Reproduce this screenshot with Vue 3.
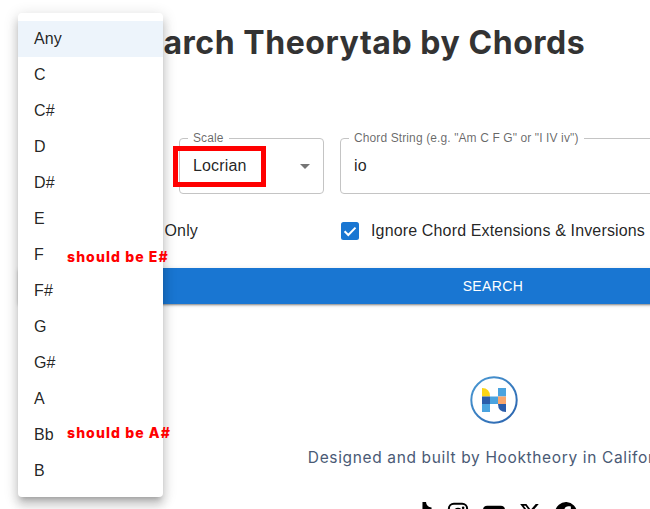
<template>
  <div class="page">
    <h1 class="title">Search Theorytab by Chords</h1>

    <div class="fields">
      <div class="field key-field">
        <span class="field-label">Key</span>
        <span class="field-value">Any</span>
      </div>
      <div class="field scale-field">
        <span class="field-label">Scale</span>
        <span class="field-value">Locrian</span>
        <span class="caret"></span>
      </div>
      <div class="field chord-field">
        <span class="field-label">Chord String (e.g. "Am C F G" or "I IV iv")</span>
        <span class="field-value">io</span>
      </div>
    </div>

    <div class="checks">
      <label class="check first-check">Exact Key Only</label>
      <label class="check">
        <svg class="checkbox" width="18" height="18" viewBox="0 0 18 18">
          <rect width="18" height="18" rx="2.5" fill="#1976d2" />
          <path d="M3.6 9.3l3.7 3.7 7.2-7.4" fill="none" stroke="#fff" stroke-width="2" />
        </svg>
        Ignore Chord Extensions &amp; Inversions
      </label>
    </div>

    <button class="search">SEARCH</button>

    <footer class="footer">
      <svg class="logo" width="48" height="48" viewBox="0 0 48 48">
        <defs>
          <linearGradient id="ring" x1="0" y1="0" x2="1" y2="1">
            <stop offset="0" stop-color="#4a9ad4" />
            <stop offset="1" stop-color="#2a62ad" />
          </linearGradient>
        </defs>
        <circle cx="24" cy="24" r="22.7" fill="none" stroke="url(#ring)" stroke-width="2" />
        <path d="M12 12q8 0 8 8.500h-8z" fill="#fbd416" />
        <rect x="12" y="20.500" width="8" height="7.500" fill="#2a5caa" />
        <rect x="12" y="28" width="8" height="8" fill="#4aa3df" />
        <rect x="20" y="20.500" width="8" height="7.500" fill="#4aa3df" />
        <rect x="28" y="12" width="8" height="8.500" fill="#4aa3df" />
        <rect x="28" y="20.500" width="8" height="7.500" fill="#f9a66c" />
        <path d="M28 28h8v8q-8 0-8-8z" fill="#2a5caa" />
      </svg>
      <p class="credit">Designed and built by Hooktheory in California</p>
      <div class="socials">
        <svg width="22" height="22" viewBox="0 0 24 24"><path d="M12.525.02c1.310-.02 2.610-.01 3.910-.02.080 1.530.630 3.090 1.750 4.170 1.120 1.110 2.700 1.620 4.240 1.790v4.030c-1.440-.050-2.890-.350-4.200-.970-.570-.260-1.100-.590-1.620-.930-.010 2.920.010 5.840-.020 8.750-.080 1.400-.540 2.790-1.350 3.940-1.310 1.920-3.580 3.170-5.910 3.210-1.430.080-2.860-.310-4.080-1.030-2.020-1.190-3.440-3.370-3.650-5.710-.020-.500-.030-1-.010-1.490.180-1.900 1.120-3.720 2.580-4.960 1.660-1.440 3.980-2.130 6.150-1.720.020 1.480-.040 2.960-.040 4.440-.990-.320-2.150-.230-3.020.370-.630.410-1.110 1.040-1.360 1.750-.210.510-.150 1.070-.140 1.610.240 1.640 1.820 3.020 3.500 2.870 1.120-.010 2.190-.660 2.770-1.610.190-.330.400-.670.410-1.060.100-1.790.060-3.570.070-5.360.010-4.030-.010-8.050.020-12.070z" /></svg>
        <svg width="22" height="22" viewBox="0 0 24 24"><rect x="2" y="2" width="20" height="20" rx="5.500" fill="none" stroke="#000" stroke-width="2.200" /><circle cx="12" cy="12" r="4.500" fill="none" stroke="#000" stroke-width="2.200" /><circle cx="17.600" cy="6.400" r="1.400" /></svg>
        <svg width="22" height="22" viewBox="0 0 24 24"><path d="M4.500 4h15A4.500 4.500 0 0 1 24 8.500v7a4.500 4.500 0 0 1-4.500 4.500h-15A4.500 4.500 0 0 1 0 15.500v-7A4.500 4.500 0 0 1 4.500 4z" /></svg>
        <svg width="22" height="22" viewBox="0 0 24 24"><path d="M18.244 2.250h3.308l-7.227 8.260 8.502 11.240H16.170l-5.214-6.817L4.990 21.750H1.680l7.730-8.835L1.254 2.250H8.080l4.713 6.231zm-1.161 17.520h1.833L7.084 4.126H5.117z" /></svg>
        <svg width="22" height="22" viewBox="0 0 24 24"><path d="M24 12a12 12 0 1 0-13.900 11.900v-8.400H7.100V12h3V9.400c0-3 1.800-4.700 4.500-4.700 1.300 0 2.700.200 2.700.200v3h-1.500c-1.500 0-2 .900-2 1.900V12h3.400l-.500 3.500h-2.900v8.400A12 12 0 0 0 24 12z" /></svg>
      </div>
    </footer>

    <ul class="menu">
      <li v-for="(note, i) in notes" :key="note" class="menu-item" :class="{ selected: i === 0 }">{{ note }}</li>
    </ul>

    <span class="highlight"></span>
    <span class="note note-f">should be E#</span>
    <span class="note note-bb">should be A#</span>
  </div>
</template>

<script setup>
const notes = ['Any', 'C', 'C#', 'D', 'D#', 'E', 'F', 'F#', 'G', 'G#', 'A', 'Bb', 'B']
</script>

<style>
html, body {
  margin: 0;
  height: 509px;
  overflow: hidden;
  background: #fff;
}
</style>

<style scoped>
.page {
  position: relative;
  width: 986px;
  height: 509px;
  padding: 0 18px;
  box-sizing: border-box;
  font-family: "Liberation Sans", Arial, sans-serif;
  letter-spacing: .15px;
  color: rgba(0, 0, 0, .87);
}
.title {
  margin: 0;
  padding: 24px 0 0 104px;
  font-family: Inter, sans-serif;
  font-size: 32px;
  font-weight: 700;
  line-height: 38px;
  letter-spacing: .55px;
  color: #333;
}
.fields {
  display: flex;
  gap: 16px;
  margin-top: 76px;
}
.field {
  position: relative;
  height: 56px;
  box-sizing: border-box;
  display: flex;
  align-items: center;
  padding: 0 13px;
  border: 1px solid #c4c4c4;
  border-radius: 4px;
  font-size: 16px;
}
.key-field {
  width: 145px;
}
.scale-field {
  width: 145px;
}
.chord-field {
  flex: 1;
}
.field-label {
  position: absolute;
  top: -8px;
  left: 8px;
  padding: 0 5px;
  background: #fff;
  font-size: 12px;
  line-height: 14px;
  letter-spacing: .11px;
  color: rgba(0, 0, 0, .6);
}
.caret {
  position: absolute;
  right: 13px;
  top: 25px;
  border-left: 5.5px solid transparent;
  border-right: 5.5px solid transparent;
  border-top: 5.5px solid rgba(0, 0, 0, .54);
}
.checks {
  display: flex;
  margin-top: 27px;
  height: 20px;
}
.check {
  display: flex;
  align-items: center;
  gap: 12px;
  font-size: 16px;
  line-height: 20px;
}
.first-check {
  width: 323px;
  justify-content: flex-end;
  padding-right: 143px;
  box-sizing: border-box;
}
.checkbox {
  flex: none;
}
.search {
  display: block;
  width: 100%;
  height: 36px;
  margin-top: 27px;
  border: 0;
  border-radius: 2px;
  background: #1976d2;
  color: #fff;
  font-family: inherit;
  font-size: 14px;
  letter-spacing: .4px;
  box-shadow: 0 3px 1px -2px rgba(0,0,0,.2), 0 2px 2px 0 rgba(0,0,0,.14), 0 1px 5px 0 rgba(0,0,0,.12);
}
.footer {
  display: flex;
  flex-direction: column;
  align-items: center;
  margin-top: 72px;
}
.logo {
  margin-left: 2px;
}
.credit {
  margin: 24px 0 0;
  font-family: Inter, sans-serif;
  font-size: 15.500px;
  line-height: 20px;
  letter-spacing: .64px;
  color: #4a5a75;
  white-space: nowrap;
}
.socials {
  display: flex;
  gap: 14px;
  margin: 34px 0 0 2px;
}
.menu {
  position: absolute;
  left: 18px;
  top: 13px;
  width: 145px;
  margin: 0;
  padding: 8px 0;
  list-style: none;
  background: #fff;
  border-radius: 4px;
  box-shadow: 0 5px 5px -3px rgba(0,0,0,.2), 0 8px 10px 1px rgba(0,0,0,.14), 0 3px 14px 2px rgba(0,0,0,.12);
}
.menu-item {
  height: 36px;
  padding-left: 16px;
  font-size: 16px;
  line-height: 36px;
}
.selected {
  background: #edf4fb;
}
.highlight {
  position: absolute;
  left: 173px;
  top: 146px;
  width: 93px;
  height: 41px;
  box-sizing: border-box;
  border: 5px solid #f00;
}
.note {
  position: absolute;
  left: 67px;
  font-family: Inter, sans-serif;
  font-size: 14px;
  font-weight: 800;
  line-height: 16px;
  letter-spacing: 1.1px;
  color: #f00;
  white-space: nowrap;
}
.note-f {
  top: 249px;
}
.note-bb {
  top: 425px;
}
</style>
